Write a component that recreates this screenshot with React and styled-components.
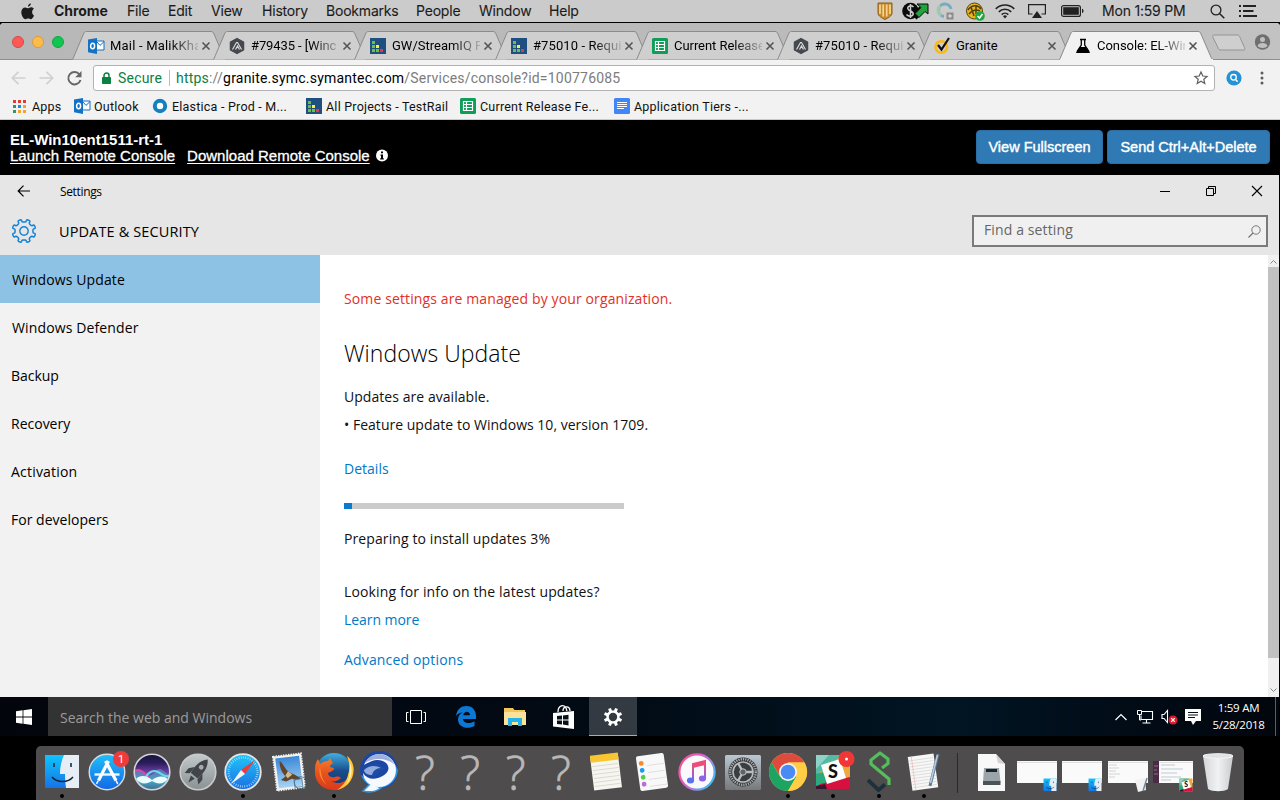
import React from "react";
import styled, { createGlobalStyle, css } from "styled-components";

const mac = `Roboto, "Noto Sans", sans-serif`;
const segoe = `"Open Sans", "Noto Sans", sans-serif`;
const helv = `"Liberation Sans", Arial, sans-serif`;

const GlobalStyle = createGlobalStyle`
  * { box-sizing: border-box; }
  html, body { margin: 0; padding: 0; background: #000; overflow: hidden; }
  svg { display: block; flex: none; overflow: visible; }
`;

const Screen = styled.div`
  width: 1280px;
  height: 800px;
  display: flex;
  flex-direction: column;
  background: #000;
  overflow: hidden;
  white-space: nowrap;
`;

/* ---------- menu bar ---------- */

const MenuBar = styled.div`
  height: 22px;
  flex: none;
  display: flex;
  align-items: center;
  background: #cbcbcb;
  color: #1b1b1b;
  font: 400 14px/22px Inter, ${mac};
`;

const AppleSlot = styled.div`
  width: 54px;
  padding-left: 21px;
`;

const MenuItem = styled.span`
  width: ${(p) => p.$w}px;
  font-weight: ${(p) => (p.$bold ? 700 : 400)};
  letter-spacing: ${(p) => p.$ls || 0}px;
  -webkit-text-stroke: ${(p) => (p.$bold ? 0 : 0.1)}px #1b1b1b;
`;

const StatusArea = styled.div`
  margin-left: auto;
  display: flex;
  align-items: center;
  height: 22px;
`;

const StatusSlot = styled.div`
  width: ${(p) => p.$w}px;
  display: flex;
  align-items: center;
`;

/* ---------- browser ---------- */

const Browser = styled.div`
  margin-top: 1px;
  height: 97px;
  flex: none;
  border-radius: 4px 4px 0 0;
  overflow: hidden;
  background: #f2f2f2;
  border-bottom: 1px solid #c9c9c9;
  font-family: ${mac};
`;

const TabStrip = styled.div`
  height: 37px;
  display: flex;
  align-items: flex-end;
  background: linear-gradient(90deg, #b7b7b7, #bcbcbc 80%, #c2c2c2);
  box-shadow: inset 0 -1px 0 #8e8e8e;
`;

const Lights = styled.div`
  width: 72px;
  height: 37px;
  padding: 0 0 0 12px;
  display: flex;
  align-items: center;
  gap: 8px;
`;

const Light = styled.i`
  width: 12px;
  height: 12px;
  border-radius: 50%;
  background: ${(p) => p.$c};
  border: 1px solid ${(p) => p.$b};
`;

const TabBox = styled.div`
  width: 141px;
  height: 29px;
  position: relative;
  display: flex;
  align-items: center;
  padding-left: 16px;
  z-index: ${(p) => (p.$active ? 2 : 1)};
`;

const TabShape = styled.svg`
  position: absolute;
  left: 0;
  top: 0;
`;

const TabTitle = styled.span`
  position: relative;
  width: 88px;
  margin-left: 6px;
  font-size: 13px;
  line-height: 28px;
  letter-spacing: ${(p) => p.$ls || 0}px;
  color: #000;
  ${(p) =>
    p.$fade &&
    css`
      mask-image: linear-gradient(90deg, #000 60px, rgba(0, 0, 0, 0.15) 100%);
    `}
`;

const TabIcon = styled.span`
  position: relative;
  width: 16px;
`;

const TabClose = styled.span`
  position: relative;
  margin-left: 4px;
`;

const StripEnd = styled.div`
  display: flex;
  align-items: center;
  height: 37px;
  padding: 0 0 0 12px;
  gap: 9px;
`;

const Toolbar = styled.div`
  height: 36px;
  display: flex;
  align-items: center;
  padding-left: 11px;
`;

const NavButton = styled.span`
  width: ${(p) => p.$w}px;
`;

const Omnibox = styled.div`
  width: 1122px;
  height: 26px;
  border: 1px solid #b2b2b2;
  border-radius: 3px;
  background: #fff;
  display: flex;
  align-items: center;
  padding: 0 6px 0 7px;
  font-size: 14px;
  color: #7c7c7c;
`;

const Secure = styled.span`
  color: #0b8043;
  margin-left: 6px;
  width: 52px;
  letter-spacing: 0.2px;
  border-right: 1px solid #bdbdbd;
  line-height: 16px;
`;

const Url = styled.span`
  margin-left: 6px;
  letter-spacing: 0.21px;
  flex: 1;
`;

const Green = styled.span`
  color: #0b8043;
`;

const Host = styled.span`
  color: #000;
`;

const ToolbarEnd = styled.div`
  display: flex;
  align-items: center;
  padding-left: 11px;
  gap: 18px;
`;

const Bookmarks = styled.div`
  height: 20px;
  display: flex;
  align-items: center;
  padding-left: 12px;
`;

const Bookmark = styled.span`
  width: ${(p) => p.$w}px;
  display: flex;
  align-items: center;
  gap: 4px;
  font-size: 12.5px;
  letter-spacing: 0.22px;
  color: #111;
`;

/* ---------- console header ---------- */

const ConsoleHeader = styled.div`
  height: 55px;
  flex: none;
  display: flex;
  justify-content: space-between;
  padding: 11px 10px 0 10px;
  color: #fff;
  font: 400 15px/17px ${helv};
`;

const ConsoleName = styled.div`
  font-weight: 700;
  height: 16px;
  font-size: 15px;
`;

const ConsoleLinks = styled.div`
  display: flex;
  align-items: center;
`;

const ConsoleLink = styled.a`
  text-decoration: underline;
  text-underline-offset: 2px;
  margin-right: ${(p) => p.$mr}px;
  -webkit-text-stroke: 0.3px #fff;
`;

const ConsoleButtons = styled.div`
  display: flex;
  gap: 4px;
  margin-top: -1px;
`;

const ConsoleButton = styled.button`
  width: ${(p) => p.$w}px;
  height: 34px;
  padding: 0;
  border: 1px solid #2a6ea4;
  border-radius: 4px;
  background: #2f7ab4;
  color: #fff;
  font: 400 14.5px/32px ${helv};
  -webkit-text-stroke: 0.4px #fff;
`;

/* ---------- remote desktop ---------- */

const Remote = styled.div`
  width: 1279px;
  flex: none;
  font-family: ${segoe};
  color: #000;
`;

const SettingsTop = styled.div`
  height: 80px;
  background: #e6e6e6;
`;

const TitleRow = styled.div`
  height: 32px;
  display: flex;
  align-items: center;
  padding-left: 17px;
`;

const TitleText = styled.span`
  margin-left: 29px;
  font-size: 12px;
  letter-spacing: -0.35px;
`;

const WindowButtons = styled.div`
  margin-left: auto;
  display: flex;
  gap: 34px;
  padding-right: 16px;
`;

const HeadRow = styled.div`
  height: 48px;
  display: flex;
  align-items: center;
  padding: 0 11px 0 11px;
`;

const HeadText = styled.span`
  margin-left: 22px;
  font-size: 14.5px;
  font-weight: 500;
  letter-spacing: 0.12px;
`;

const FindBox = styled.div`
  margin-left: auto;
  width: 296px;
  height: 32px;
  border: 2px solid #7a7a7a;
  background: #f0f0f0;
  color: #666;
  font-size: 14px;
  line-height: 26px;
  letter-spacing: 0.12px;
  display: flex;
  align-items: center;
  justify-content: space-between;
  padding: 0 5px 0 10px;
`;

const FindLabel = styled.span`
  height: 28px;
`;

const Body = styled.div`
  height: 442px;
  display: flex;
  background: #fff;
`;

const Sidebar = styled.div`
  width: 320px;
  background: #f2f2f2;
`;

const SideItem = styled.div`
  height: 48px;
  line-height: 49px;
  padding-left: ${(p) => (p.$indent ? 12 : 11)}px;
  font-size: 14px;
  letter-spacing: ${(p) => p.$ls || 0}px;
  background: ${(p) => (p.$active ? "#8ec2e4" : "transparent")};
`;

const Content = styled.div`
  flex: 1;
  padding: 30px 0 0 24px;
`;

const Line = styled.div`
  height: 28px;
  line-height: 28px;
  margin-top: ${(p) => p.$mt || 0}px;
  font-size: 14px;
  letter-spacing: ${(p) => p.$ls ?? 0.12}px;
  color: ${(p) => p.$c || "#111"};
`;

const Heading = styled.div`
  height: 36px;
  line-height: 35px;
  margin-top: 23px;
  font-size: 23px;
  font-weight: 300;
  color: #000;
  letter-spacing: 0.05px;
`;

const Track = styled.div`
  width: 280px;
  height: 6px;
  margin-top: 20px;
  background: #cbcbcb;
`;

const Fill = styled.div`
  width: 8px;
  height: 6px;
  background: #0a7bd0;
`;

const Scrollbar = styled.div`
  width: 11px;
  background: #f0f0f0;
  display: flex;
  flex-direction: column;
  align-items: center;
  justify-content: space-between;
  padding: 4px 0 4px;
`;

const Thumb = styled.div`
  width: 11px;
  height: 391px;
  margin-bottom: 27px;
  background: #c1c1c1;
`;

const Taskbar = styled.div`
  height: 39px;
  display: flex;
  background: linear-gradient(90deg, #02060c 0, #020a14 45%, #011523 75%, #010d19 86%, #02060d 100%);
`;

const TaskCell = styled.div`
  width: ${(p) => p.$w || 49}px;
  margin-right: ${(p) => p.$mr || 0}px;
  margin-left: ${(p) => p.$ml || 0}px;
  display: flex;
  align-items: center;
  justify-content: center;
  ${(p) =>
    p.$active &&
    css`
      background: #333a41;
      box-shadow: inset 0 -1px 0 #76b9ed;
    `}
`;

const TaskSearch = styled.div`
  width: 344px;
  background: #333;
  color: #9b9b9b;
  font-size: 14px;
  line-height: 41px;
  padding-left: 12px;
`;

const Tray = styled.div`
  margin-left: auto;
  display: flex;
  align-items: center;
`;

const TrayClock = styled.div`
  width: 73px;
  text-align: center;
  color: #fff;
  font-size: 11.5px;
  line-height: 17px;
  letter-spacing: -0.25px;
  padding-bottom: 1px;
`;

const ShowDesktop = styled.div`
  width: 4px;
  height: 39px;
  border-left: 1px solid #55606a;
`;

/* ---------- dock ---------- */

const DockBar = styled.div`
  margin: 10px 0 0 36px;
  width: 1208px;
  height: 54px;
  flex: none;
  display: flex;
  padding-left: 3px;
  border-radius: 5px 5px 0 0;
  background: #4f4c4e;
`;

const DockItem = styled.div`
  width: 45.4px;
  height: 54px;
  padding-top: 4px;
  display: flex;
  flex-direction: column;
  align-items: center;
`;

const Running = styled.i`
  width: 4px;
  height: 4px;
  border-radius: 50%;
  background: #000;
`;

const Missing = styled.span`
  height: 44px;
  font: 300 47px/44px "Open Sans", sans-serif;
  color: #b9b8b8;
  -webkit-text-stroke: 0.7px #b9b8b8;
`;

const DockDivider = styled.div`
  width: 22px;
  margin-top: 7px;
  height: 40px;
  display: flex;
  justify-content: center;
  &::after {
    content: "";
    width: 1px;
    background: #2b292a;
  }
`;

/* ---------- small icons ---------- */

const Outlook = () => (
  <svg width="16" height="16" viewBox="0 0 16 16">
    <path d="M8 3h8v9H8z" fill="#fff" stroke="#1272c6" />
    <path d="M9 4l3 3.400L16 3.600" fill="none" stroke="#1272c6" />
    <path d="M0 1.500 9 0v16L0 14.300z" fill="#1272c6" />
    <ellipse cx="4.600" cy="8" rx="2" ry="2.700" fill="none" stroke="#fff" strokeWidth="1.500" />
  </svg>
);
const Aha = () => (
  <svg width="16" height="16" viewBox="0 0 16 16">
    <path d="M8 .6l6.500 3.600v7.600L8 15.400l-6.500-3.600V4.200z" fill="#45494d" stroke="#45494d" strokeWidth="1.500" strokeLinejoin="round" />
    <path d="M3.500 11.500 7.500 4.500h1l4 7M6.500 11.500l2-3.500 2 3.500" fill="none" stroke="#d8d8d8" strokeWidth="1.200" />
  </svg>
);
const TestRail = () => (
  <svg width="16" height="16" viewBox="0 0 16 16">
    <path d="M0 0h16v16H0z" fill="#1f4f80" />
    <path d="M2 3h3v3H2zM2 7h3v3H2zM2 11h3v3H2zM6 11h3v3H6z" fill="#6cc04a" />
    <path d="M6 7h3v3H6z" fill="#f6ee4c" />
    <path d="M10 11h3v3h-3z" fill="#d93a58" />
  </svg>
);
const Sheets = () => (
  <svg width="16" height="16" viewBox="0 0 16 16">
    <rect width="16" height="16" rx="1.500" fill="#0f9d58" />
    <path d="M3.500 3.500h9v9h-9zM6.500 3.500v9M3.500 6.500h9M3.500 9.500h9" fill="none" stroke="#fff" strokeWidth="1.200" />
  </svg>
);
const Docs = () => (
  <svg width="16" height="16" viewBox="0 0 16 16">
    <rect width="16" height="16" rx="1.500" fill="#4285f4" />
    <path d="M3 4.500h10M3 6.500h10M3 8.500h10M3 10.500h7" stroke="#fff" />
  </svg>
);
const Norton = () => (
  <svg width="16" height="16" viewBox="0 0 16 16">
    <circle cx="7.300" cy="9" r="5.800" fill="none" stroke="#fdb813" strokeWidth="2.600" />
    <path d="M4 7l3.500 4.500L15 0" fill="none" stroke="#111" strokeWidth="2.200" />
  </svg>
);
const Flask = () => (
  <svg width="16" height="16" viewBox="0 0 16 16">
    <path d="M5 1.500h6M6.300 2v5L2 13.500M9.700 2v5l4.300 6.500" fill="none" stroke="#000" strokeWidth="1.300" />
    <path d="M5 9.500h6l3.500 5H1.500z" fill="#000" stroke="#000" />
  </svg>
);
const AppsGrid = () => (
  <svg width="16" height="16" viewBox="0 0 16 16">
    {["#e43d30", "#e43d30", "#e43d30", "#2a9d5c", "#1e88e5", "#f4a428", "#2a9d5c", "#f4a428", "#f4a428"].map((c, i) => (
      <rect key={i} x={1 + (i % 3) * 5} y={2 + Math.floor(i / 3) * 5} width="3" height="3" fill={c} />
    ))}
  </svg>
);
const Elastica = () => (
  <svg width="16" height="16" viewBox="0 0 16 16">
    <circle cx="8" cy="8" r="5.200" fill="#fff" stroke="#1381be" strokeWidth="4" />
  </svg>
);
const CloseX = () => (
  <svg width="8" height="8" viewBox="0 0 8 8">
    <path d="M.5.5l7 7M7.500.5l-7 7" stroke="#555" strokeWidth="1.600" />
  </svg>
);

const icons = { Outlook, Aha, TestRail, Sheets, Docs, Norton, Flask, AppsGrid, Elastica };

const menus = [
  ["Chrome", 73],
  ["File", 41],
  ["Edit", 43],
  ["View", 51],
  ["History", 64],
  ["Bookmarks", 90],
  ["People", 63],
  ["Window", 70],
  ["Help", 40],
];

const tabs = [
  ["Outlook", "Mail - MalikKha", 0.2],
  ["Aha", "#79435 - [Winc", -0.1],
  ["TestRail", "GW/StreamIQ F", 0],
  ["TestRail", "#75010 - Requi", 0.1],
  ["Sheets", "Current Release", -0.05],
  ["Aha", "#75010 - Requi", 0.1],
  ["Norton", "Granite", 0],
  ["Flask", "Console: EL-Wir", -0.05],
];

const bookmarks = [
  ["AppsGrid", "Apps", 62],
  ["Outlook", "Outlook", 78],
  ["Elastica", "Elastica - Prod - M...", 154],
  ["TestRail", "All Projects - TestRail", 154],
  ["Sheets", "Current Release Fe...", 154],
  ["Docs", "Application Tiers -...", 150],
];

function Tab({ icon, title, ls, active }) {
  const Icon = icons[icon];
  return (
    <TabBox $active={active}>
      <TabShape width="155" height="29" viewBox="0 0 155 29">
        <path
          d="M0 28.500C.8 28.300 1.200 27.500 1.700 26L11.500 3C12.300 1.200 12.800.5 14.500.5H139C140.700.5 141.200 1.200 142 3L151.500 25C152.300 27 153 28.300 154 28.500"
          fill={active ? "#f2f2f2" : "#cfcfcf"}
          stroke="#8b8b8b"
        />
        {active && <path d="M1 29H154" stroke="#f2f2f2" strokeWidth="2" />}
      </TabShape>
      <TabIcon>
        <Icon />
      </TabIcon>
      <TabTitle $fade={title !== "Granite"} $ls={ls}>
        {title}
      </TabTitle>
      <TabClose>
        <CloseX />
      </TabClose>
    </TabBox>
  );
}

function StatusIcons() {
  return (
    <>
      <StatusSlot $w={25}>
        <svg width="16" height="20" viewBox="0 0 16 20">
          <path d="M1 2h14v10c0 3-4 5-7 6.500C5 17 1 15 1 12z" fill="#c98a2c" stroke="#8d5d17" />
          <path d="M3 3.500v9.500M6.200 3.500v12M9.700 3.500v12M13 3.500v9.500" stroke="#f6d591" strokeWidth="1.700" />
        </svg>
      </StatusSlot>
      <StatusSlot $w={35}>
        <svg width="27" height="18" viewBox="0 0 27 18">
          <circle cx="8.500" cy="9" r="8.300" fill="#0b0b0b" />
          <path d="M12 15l8-8" stroke="#0b0b0b" strokeWidth="7" />
          <path d="M11.500 5C9.500 3 5.500 3.800 5.800 6.500S11.500 9 11.200 12 6 14.500 4.500 12.500M8.500 2v14" fill="none" stroke="#cfcfcf" strokeWidth="1.500" />
          <path d="M15 2h11v10l-3-2.500-6 6-4-4 6-6z" fill="#23a33c" stroke="#0b0b0b" />
        </svg>
      </StatusSlot>
      <StatusSlot $w={29}>
        <svg width="17" height="18" viewBox="0 0 17 18">
          <path d="M14 7A6.300 6.300 0 1 0 7 14.500" fill="none" stroke="#73adc2" strokeWidth="3" />
          <path d="M3 3.500A6.300 6.300 0 0 0 4 13.500" fill="none" stroke="#a4c9ae" strokeWidth="3" />
          <path d="M9.500 10.500h7v7h-7z" fill="#8d8d8d" />
          <path d="M13 12v4M11 14h4" stroke="#e8e8e8" />
        </svg>
      </StatusSlot>
      <StatusSlot $w={29}>
        <svg width="19" height="19" viewBox="0 0 19 19">
          <circle cx="8.500" cy="9" r="8" fill="#e9b51c" stroke="#57430b" />
          <path d="M2 8c3-5 10-6 13-1M3 12c3-4 8-5 11-3M5 5l3 9M10 3v9" fill="none" stroke="#51400f" strokeWidth="1.500" />
          <circle cx="14" cy="14" r="4.800" fill="#20a63e" />
          <path d="M11.500 14l2 2 3-4" fill="none" stroke="#fff" strokeWidth="1.500" />
        </svg>
      </StatusSlot>
      <StatusSlot $w={33}>
        <svg width="20" height="15" viewBox="0 0 20 15">
          <path d="M.8 4.800a13 13 0 0 1 18.400 0M3.800 7.800a8.800 8.800 0 0 1 12.400 0M6.700 10.600a4.700 4.700 0 0 1 6.600 0" fill="none" stroke="#222" strokeWidth="1.700" />
          <path d="M10 14.500l-2-2.200a2.800 2.800 0 0 1 4 0z" fill="#222" />
        </svg>
      </StatusSlot>
      <StatusSlot $w={33}>
        <svg width="18" height="14" viewBox="0 0 18 14">
          <path d="M4.500 10H.6V.6h16.800V10h-3.900" fill="none" stroke="#222" strokeWidth="1.200" />
          <path d="M9 7l5 7H4z" fill="#222" />
        </svg>
      </StatusSlot>
      <StatusSlot $w={41}>
        <svg width="23" height="12" viewBox="0 0 23 12">
          <rect x=".6" y=".6" width="18.800" height="10.800" rx="2" fill="none" stroke="#222" strokeWidth="1.200" />
          <rect x="2.200" y="2.200" width="15.600" height="7.600" fill="#222" />
          <path d="M21 3.800c2 .6 2 3.800 0 4.400z" fill="#222" />
        </svg>
      </StatusSlot>
      <MenuItem $w={108} $ls={-0.2}>Mon 1:59 PM</MenuItem>
      <StatusSlot $w={29}>
        <svg width="15" height="15" viewBox="0 0 15 15">
          <circle cx="6" cy="6" r="4.900" fill="none" stroke="#222" strokeWidth="1.300" />
          <path d="M9.500 9.500l4.800 4.800" stroke="#222" strokeWidth="1.500" />
        </svg>
      </StatusSlot>
      <StatusSlot $w={41}>
        <svg width="18" height="12" viewBox="0 0 18 12">
          <path d="M4 1h13M4 6h10.500M4 11h14M0 1h2M0 6h2M0 11h2" stroke="#222" strokeWidth="1.800" />
        </svg>
      </StatusSlot>
    </>
  );
}

/* ---------- dock artwork, drawn around the icon's centre ---------- */

const Art = ({ children }) => (
  <svg width="44" height="44" viewBox="-22 -22 44 44">
    {children}
  </svg>
);

const FinderFace = () => (
  <>
    <path d="M-17-17H17V16H-17z" fill="url(#finderL)" />
    <path d="M2-17C-1-10-2-4-2 2H3c0 5 .5 10 1 14H17V-17z" fill="#e6edf5" />
    <path d="M-8-9v4M9-9v4" stroke="#12304a" strokeWidth="1.600" />
    <path d="M-10 5C-5 11 6 11 11 5" fill="none" stroke="#12202d" strokeWidth="1.400" />
  </>
);

const SlackFace = () => (
  <>
    <path d="M-17-17H17V17H-17z" fill="#eda93b" />
    <path d="M-17-17H8L-4-4-13 0-17 4z" fill="#56b9a4" />
    <path d="M-17-17H-4L-17-3z" fill="#8fd3c8" />
    <path d="M-17 2L-10 0-5 12-17 17z" fill="#2bab7b" />
    <path d="M-13 12L17 5V17H-17z" fill="#d6103f" />
    <path d="M-17 14L-8 12-6 17H-17z" fill="#3c1330" />
    <path d="M-12-7L7-13 13 6-6 12z" fill="#fff" />
    <text x="0" y="6" textAnchor="middle" fontFamily="Lato, sans-serif" fontWeight="900" fontSize="18" fill="#111">
      S
    </text>
  </>
);

const dock = [
  { run: true, art: <FinderFace /> },
  {
    art: (
      <>
        <circle r="17.800" fill="url(#store)" stroke="#d9dde2" strokeWidth="1.400" />
        <path d="M-12.500 2.500H12.500" stroke="#f1f6fb" strokeWidth="2.400" />
        <path d="M-8.500 8.500L1.500-11M9 8.500L-1.500-11" stroke="#fff" strokeWidth="3.200" />
        <path d="M-9 9l-1.200 2.400M9.300 9l1.200 2.400" stroke="#fff" strokeWidth="1.500" strokeLinecap="round" />
        <circle cx="14" cy="-13" r="8" fill="#f03b3b" />
        <text x="14" y="-9" textAnchor="middle" fontFamily="Roboto, sans-serif" fontSize="11" fill="#fff">
          1
        </text>
      </>
    ),
  },
  {
    art: (
      <>
        <circle r="17.800" fill="url(#siri)" />
        <path d="M-17-2C-10-5-8 3-4 4S5-4 8-3 15 2 17 3C15 12 8 17 0 17.500-9 17-15 12-17 6z" fill="#5ca5c8" opacity=".55" />
        <path d="M-17-1C-11-4-7 2-3 5" fill="none" stroke="#f23fa6" strokeWidth="2" opacity=".85" />
        <path d="M-6 5C-3-1 2-2 6 0S12 5 17 4" fill="none" stroke="#67e8f0" strokeWidth="2" opacity=".9" />
        <path d="M-16 7C-11 2-5 4 0 8 5 4 11 3 16 7 12 12 6 13 0 9-6 13-12 12-16 7z" fill="#e9fdff" />
        <circle r="17.800" fill="none" stroke="#d4d4da" strokeWidth="1.600" />
      </>
    ),
  },
  {
    art: (
      <>
        <circle r="17.800" fill="url(#steel)" stroke="#c8cbcc" strokeWidth="1.600" />
        <g transform="translate(0 -1) rotate(40)">
          <path d="M0-15C5-10 6-3 4.500 6h-9C-6-3-5-10 0-15z" fill="#414549" />
          <path d="M-5-1L-9 4v6l4-3zM5-1L9 4v6L5 7zM-2.500 8h5L0 15z" fill="#414549" />
          <circle cy="-5" r="2.400" fill="#a5abad" />
        </g>
      </>
    ),
  },
  {
    run: true,
    art: (
      <>
        <circle r="17.800" fill="url(#safari)" stroke="#e2e4e6" strokeWidth="1.800" />
        <circle r="14.500" fill="none" stroke="#b9e7fb" strokeWidth="2.200" strokeDasharray=".7 1.570" />
        <path d="M12-12L2 2-2-2z" fill="#f03a36" />
        <path d="M-12 12L2 2-2-2z" fill="#f1f2f4" />
      </>
    ),
  },
  {
    art: (
      <g transform="rotate(-7)">
        <path d="M-14-17H14V17H-14z" fill="#f2f2f0" stroke="#f2f2f0" strokeWidth="2" strokeDasharray="1.500 1" />
        <path d="M-12-15H12V15H-12z" fill="url(#sky)" />
        <path d="M-8-12C-5-10-4-4-1-1 2 2 8 4 11 8 8 9 5 8 2 7L-4 9-9 7-4 4C-7 0-9-6-8-12z" fill="#60452f" />
        <path d="M-4 3L-1-1 3 3-2 6z" fill="#d6b98b" />
        <circle cx="10" cy="12" r="6" fill="none" stroke="#35536e" opacity=".6" />
        <path d="M4 8h8v8H4z" fill="none" stroke="#44708f" opacity=".7" />
      </g>
    ),
  },
  {
    run: true,
    art: (
      <>
        <circle cy="-1" r="18" fill="url(#globe)" />
        <path d="M13-16C19-11 21-4 19 3 16 14 7 19-2 18-14 17-20 8-19-3-19-7-18-10-16-13L-14-8C-12-10-9-11-6-11L-4-14C-3-12-2-10-1-9-3-8-4-6-4-5L0-4C0-1-4 0-6 1-6 4-3 6 1 5 4 4 6 5 7 6 4 9 0 10-3 9 4 13 12 11 14 4 16-2 16-10 13-16z" fill="url(#fox)" />
        <path d="M13-16C22-9 21 5 14 12 11 15 7 17 3 18 10 13 13 8 14 3 16-3 16-9 13-16z" fill="#fcc93a" />
        <path d="M16-9C19-2 18 7 12 13 16 6 16-1 16-9z" fill="#fff0a0" />
        <path d="M-14-6C-16 1-13 9-7 13-12 8-13 2-14-6z" fill="#f68a2c" />
      </>
    ),
  },
  {
    art: (
      <>
        <circle cy="-2" r="19" fill="#1c46a4" />
        <path d="M-18 3A19 19 0 0 0 19-2L16-8 0 15z" fill="#2f94e0" />
        <path d="M-8 11L-16 19C-8 21-3 20 2 16z" fill="#f4f9fd" stroke="#2f94e0" strokeWidth="1.600" />
        <path d="M-15-7C-12-15-5-18 1-18 10-18 17-10 17-2 17 8 9 15 0 15-9 15-16 8-16 1-13 6-7 8-1 6 6 4 11-1 9-6 7-12-2-13-7-11-10-10-13-8-15-7z" fill="#f6fafe" />
        <path d="M-14-9C-11-15-5-18 1-18 8-17 13-13 15-8 7-14-5-15-14-9z" fill="#9dafdd" />
        <path d="M-16 0C-14-6-8-9-2-8 3-7 6-4 6-1 3-2-1 0-3 4-8 5-14 3-16 0z" fill="#1d4ba6" />
        <path d="M-15-2C-10-7-3-7 2-4-3-4-6-1-7 3-11 3-15 1-15-2z" fill="#94abdc" />
      </>
    ),
  },
  { missing: true },
  { missing: true },
  { missing: true },
  { missing: true },
  {
    art: (
      <g transform="rotate(-7)">
        <path d="M-14-17H14V17H-14z" fill="#f7f5ef" />
        <path d="M-14-18H14V-11H-14z" fill="#f9c62f" />
        {[-7, -3, 1, 5, 9, 13].map((y) => (
          <path key={y} d={`M-13 ${y}H13`} stroke="#d6d4cc" strokeWidth=".8" />
        ))}
      </g>
    ),
  },
  {
    art: (
      <g transform="rotate(-8)">
        <rect x="-14" y="-17.500" width="28" height="35" rx="2" fill="#f8f8f8" />
        {["#f78b2a", "#1c9af0", "#51cf4b", "#bb6cd8"].map((c, i) => (
          <g key={c}>
            <circle cx="-9.500" cy={-10 + i * 7} r="2.400" fill={c} />
            <path d={`M-4 ${-7 + i * 7}H13`} stroke="#dcdcdc" strokeWidth=".8" />
          </g>
        ))}
      </g>
    ),
  },
  {
    art: (
      <>
        <circle r="17.600" fill="#f9f8fb" stroke="url(#itunes)" strokeWidth="2.200" />
        <path d="M-4 8V-8L8-11V6" fill="none" stroke="url(#note)" strokeWidth="2" />
        <path d="M-4-8L8-11V-7L-4-4z" fill="#ee4b77" />
        <ellipse cx="-6.500" cy="8.500" rx="3.600" ry="2.900" fill="#5b72ee" />
        <ellipse cx="5.500" cy="6.500" rx="3.600" ry="2.900" fill="#8a63e6" />
      </>
    ),
  },
  {
    art: (
      <>
        <rect x="-18" y="-17" width="36" height="35" rx="1.500" fill="url(#prefs)" />
        <circle r="14.500" fill="#303336" />
        <circle r="12.800" fill="none" stroke="#a9acae" strokeWidth="2.500" strokeDasharray="1.300 1" />
        <circle r="10" fill="#3b3e41" stroke="#b9bcbe" strokeWidth="1.600" />
        <path d="M0 0H10M0 0L-5-9M0 0L-5 9" stroke="#b9bcbe" strokeWidth="2.400" />
        <circle r="3.200" fill="#606366" stroke="#c3c5c7" />
      </>
    ),
  },
  {
    run: true,
    art: (
      <>
        <circle r="19" fill="#ffce44" />
        <path d="M0-9.500H16.500A19 19 0 0 0-16.500-9.500L-8 4z" fill="#dd4b3e" />
        <path d="M-16.500-9.500A19 19 0 0 0 0 19L8.500 4.500-8 4.500z" fill="#1da462" />
        <path d="M0-9.500H16.500A19 19 0 0 1 0 19L8.200 4.700z" fill="#ffce44" />
        <circle r="9" fill="#f4f4f4" />
        <circle r="7.300" fill="#4a8af4" />
      </>
    ),
  },
  {
    run: true,
    art: (
      <>
        <SlackFace />
        <circle cx="13.500" cy="-13" r="8" fill="#f03636" />
        <circle cx="13.500" cy="-13" r="1.500" fill="#fff" />
      </>
    ),
  },
  {
    run: true,
    art: (
      <>
        <path d="M3-4L9-8.500V-13L1-19-8-12V-8L10 7V13" fill="none" stroke="#54bd5c" strokeWidth="3.200" strokeLinejoin="round" />
        <path d="M-11 8L-.5 18 6 12.500" fill="none" stroke="#1d303b" strokeWidth="3.800" />
      </>
    ),
  },
  {
    run: true,
    art: (
      <>
        <g transform="rotate(-8)">
          <path d="M-14-17H12V17H-14z" fill="#f7f7f5" />
          {[-13, -10, -7, -4, -1, 2, 5, 8, 11, 14].map((y) => (
            <path key={y} d={`M-13 ${y}H11`} stroke="#d3d5d9" strokeWidth=".7" />
          ))}
          <path d="M-10.500-17V17" stroke="#f3b7b1" strokeWidth=".7" />
        </g>
        <path d="M14-18L6 14" stroke="#5f7a92" strokeWidth="3" />
        <path d="M13.500-17L6.500 11" stroke="#b9d0e4" strokeWidth="1.500" />
      </>
    ),
  },
];

const Thumbnail = ({ children, purple }) => (
  <Art>
    <path d="M-20-11H20V11H-20z" fill="#fafafa" />
    <path d="M-20-9.500H20" stroke="#e0e0e0" />
    {purple && <path d="M-20-11H-14V11H-20z" fill="#4b2a47" />}
    {children}
  </Art>
);

const files = [
  <Art>
    <path d="M-14-18H4L13-8V19H-14z" fill="#f8f8f8" />
    <path d="M4-18L13-8 6-9z" fill="#d2d2d2" />
    <path d="M-8-4H7L8.500 10H-9z" fill="#9aa5ab" />
    <path d="M-6-3H5V0H-6z" fill="#222" />
    <path d="M-9 9H8.500V13H-9z" fill="#4c5358" />
  </Art>,
  <Thumbnail>
    <g transform="translate(13 13) scale(.38)"><FinderFace /></g>
  </Thumbnail>,
  <Thumbnail>
    <g transform="translate(13 13) scale(.38)"><FinderFace /></g>
  </Thumbnail>,
  <Thumbnail>
    <path d="M-19-7h8M-19-4h10M-19-1h7M-19 2h11M-19 5h6" stroke="#c9c9c9" strokeWidth=".8" />
    <path d="M7 8L17 6 18 18 10 20z" fill="#f2f2f2" />
    <path d="M19 6L15 19" stroke="#70879b" strokeWidth="1.500" />
  </Thumbnail>,
  <Thumbnail purple>
    <path d="M-12-7H2M-12-3H10M-12 1H4M-12 5H8M-12 8H-2" stroke="#bccbd4" />
    <path d="M-19-6h4M-19-2h3M-19 2h4" stroke="#a483a0" strokeWidth=".8" />
    <g transform="translate(13 13) scale(.38)"><SlackFace /></g>
  </Thumbnail>,
  <Art>
    <path d="M-15-16H15L10 17C6 20-6 20-10 17z" fill="url(#bin)" />
    <ellipse cy="-16" rx="15" ry="2.300" fill="#dfe1e3" stroke="#f4f5f6" />
  </Art>,
];

const Grad = ({ id, stops, x1 = 0, x2 = 0, y2 = 1 }) => (
  <linearGradient id={id} x1={x1} y1="0" x2={x2} y2={y2}>
    {stops.map((s, i) => (
      <stop key={i} offset={i / (stops.length - 1)} stopColor={s} />
    ))}
  </linearGradient>
);

function Dock() {
  return (
    <DockBar>
      <svg width="0" height="0">
        <defs>
          <Grad id="finderL" stops={["#10c4fb", "#1574e8"]} />
          <Grad id="store" stops={["#1fc0fa", "#1467e6"]} />
          <Grad id="siri" stops={["#17143a", "#2b1d5c", "#6d3fa2", "#2fa6c4", "#1b2c4d"]} />
          <Grad id="steel" stops={["#c3cacb", "#899192"]} />
          <Grad id="safari" stops={["#20c6f8", "#1a6fe4"]} />
          <Grad id="sky" stops={["#3b88d8", "#a8d3f3"]} />
          <Grad id="globe" stops={["#3fb0e0", "#1b4c8c", "#15346f"]} />
          <Grad id="fox" stops={["#f5832a", "#e8511f", "#d93a1c"]} />
          <Grad id="itunes" stops={["#f4567f", "#e05ccf", "#4cb7f2"]} x2={1} y2={0.6} />
          <Grad id="note" stops={["#f0506e", "#8c5fe6"]} />
          <Grad id="prefs" stops={["#b9c7d1", "#77797b"]} />
          <Grad id="bin" stops={["#d4d6d9", "#f1f2f4", "#c9cbce"]} x2={1} y2={0} />
        </defs>
      </svg>
      {dock.map((d, i) => (
        <DockItem key={i}>
          {d.missing ? <Missing>?</Missing> : <Art>{d.art}</Art>}
          {d.run && <Running />}
        </DockItem>
      ))}
      <DockDivider />
      {files.map((f, i) => (
        <DockItem key={i}>{f}</DockItem>
      ))}
    </DockBar>
  );
}

const gearPath = (teeth, outer, inner, round) => {
  const pts = [];
  const shape = round
    ? [[-0.36, inner], [-0.24, inner + 0.5], [-0.2, outer - 0.4], [-0.12, outer], [0.12, outer], [0.2, outer - 0.4], [0.24, inner + 0.5], [0.36, inner]]
    : [[-0.3, inner], [-0.2, outer], [0.2, outer], [0.3, inner]];
  for (let i = 0; i < teeth; i++) {
    shape.forEach(([o, r]) => {
      const a = ((i + o) / teeth) * Math.PI * 2 - Math.PI / 2 + Math.PI / teeth;
      pts.push(`${(Math.cos(a) * r).toFixed(2)} ${(Math.sin(a) * r).toFixed(2)}`);
    });
  }
  return `M${pts.join("L")}Z`;
};

function RemoteDesktop() {
  return (
    <Remote>
      <SettingsTop>
        <TitleRow>
          <svg width="14" height="12" viewBox="0 0 14 12">
            <path d="M1 6h12M6.500.7L1.200 6l5.300 5.300" fill="none" stroke="#000" strokeWidth="1.200" />
          </svg>
          <TitleText>Settings</TitleText>
          <WindowButtons>
            <svg width="12" height="12" viewBox="0 0 12 12"><path d="M1 6.500h10" stroke="#000" /></svg>
            <svg width="12" height="12" viewBox="0 0 12 12">
              <path d="M1.500 3.500h7v7h-7zM3.500 3.500v-2h7v7h-2" fill="none" stroke="#000" />
            </svg>
            <svg width="12" height="12" viewBox="0 0 12 12"><path d="M1 1l10 10M11 1L1 11" stroke="#000" strokeWidth="1.100" /></svg>
          </WindowButtons>
        </TitleRow>
        <HeadRow>
          <svg width="26" height="26" viewBox="-13 -13 26 26">
            <path d={gearPath(8, 11.8, 9, true)} transform="translate(0 0)" fill="none" stroke="#1583d8" strokeWidth="1.500" strokeLinejoin="round" />
            <circle r="4.200" fill="none" stroke="#1583d8" strokeWidth="1.400" />
          </svg>
          <HeadText>UPDATE &amp; SECURITY</HeadText>
          <FindBox>
            <FindLabel>Find a setting</FindLabel>
            <svg width="13" height="13" viewBox="0 0 13 13">
              <circle cx="8" cy="5" r="4.200" fill="none" stroke="#777" />
              <path d="M5 8L.5 12.500" stroke="#777" strokeWidth="1.200" />
            </svg>
          </FindBox>
        </HeadRow>
      </SettingsTop>
      <Body>
        <Sidebar>
          <SideItem $active $indent $ls={0.13}>Windows Update</SideItem>
          <SideItem $indent $ls={0.13}>Windows Defender</SideItem>
          <SideItem $ls={-0.05}>Backup</SideItem>
          <SideItem>Recovery</SideItem>
          <SideItem $ls={0.2}>Activation</SideItem>
          <SideItem $ls={0.02}>For developers</SideItem>
        </Sidebar>
        <Content>
          <Line $c="#e3301f">Some settings are managed by your organization.</Line>
          <Heading>Windows Update</Heading>
          <Line $mt={11} $ls={0.05}>Updates are available.</Line>
          <Line $ls={0.02}>• Feature update to Windows 10, version 1709.</Line>
          <Line $mt={16} $ls={0.02} $c="#0078c8">Details</Line>
          <Track><Fill /></Track>
          <Line $mt={16} $ls={0.1}>Preparing to install updates 3%</Line>
          <Line $mt={25} $ls={0.13}>Looking for info on the latest updates?</Line>
          <Line $c="#0078c8" $ls={-0.06}>Learn more</Line>
          <Line $mt={12} $ls={0.16} $c="#0078c8">Advanced options</Line>
        </Content>
        <Scrollbar>
          <svg width="7" height="5" viewBox="0 0 7 5"><path d="M.5 4.500l3-3 3 3" fill="none" stroke="#888" /></svg>
          <Thumb />
          <svg width="7" height="5" viewBox="0 0 7 5"><path d="M.5.5l3 3 3-3" fill="none" stroke="#888" /></svg>
        </Scrollbar>
      </Body>
      <Taskbar>
        <TaskCell $w={48}>
          <svg width="16" height="16" viewBox="0 0 16 16">
            <path d="M0 2.200L6.600 1.300V7.600H0zM7.400 1.200L16 0V7.600H7.400zM0 8.400H6.600V14.700L0 13.800zM7.400 8.400H16V16L7.400 14.800z" fill="#fff" />
          </svg>
        </TaskCell>
        <TaskSearch>Search the web and Windows</TaskSearch>
        <TaskCell $w={48} $mr={1}>
          <svg width="20" height="14" viewBox="0 0 20 14">
            <path d="M4.500.5h11v13h-11zM2.500 2.500h-2v9h2M17.500 2.500h2v9h-2" fill="none" stroke="#fff" />
          </svg>
        </TaskCell>
        <TaskCell>
          <svg width="20" height="22" viewBox="0 0 20 22">
            <path d="M0 10C1 3 5 0 10.500 0 17 0 20 5 20 10v3H7c.3 4 6.500 5.500 11.500 2.300V20C11 24 2 21 2 13.500 2 10 4 7.500 7 6.500 4 6.500 1.500 8 0 10zM7.200 9.300H14C14 4.500 8 4.500 7.200 9.300z" fill="#0c78d6" fillRule="evenodd" />
          </svg>
        </TaskCell>
        <TaskCell>
          <svg width="22" height="18" viewBox="0 0 22 18">
            <path d="M0 0h9l1.500 2H21v15H0z" fill="#f1c75b" />
            <path d="M0 4h22v13H0z" fill="#fbe29a" />
            <path d="M4 18v-8h14v8h-4v-4H8v4z" fill="#24b3ea" />
          </svg>
        </TaskCell>
        <TaskCell>
          <svg width="22" height="24" viewBox="0 0 22 24">
            <path d="M5 7C5 0 11-1 13 3l1 3M10 6c0-5 7-6 7 0" fill="none" stroke="#fff" strokeWidth="1.300" />
            <path d="M0 8L21 6V24L0 21.500z" fill="#fff" />
            <path d="M4 11L9 10.500v4H4zM10 10.400L15.500 9.800v4.700H10zM4 15.500h5v4L4 19zM10 15.500h5.500v4.900L10 19.600z" fill="#05101b" />
          </svg>
        </TaskCell>
        <TaskCell $active $w={48} $ml={1}>
          <svg width="20" height="20" viewBox="-10 -10 20 20">
            <path d={gearPath(8, 9.3, 6.7) + "M-4.200 0a4.200 4.200 0 1 0 8.400 0a4.200 4.200 0 1 0-8.400 0"} fill="#fff" fillRule="evenodd" />
          </svg>
        </TaskCell>
        <Tray>
          <StatusSlot $w={22}>
            <svg width="12" height="8" viewBox="0 0 12 8"><path d="M.5 7L6 1.500 11.500 7" fill="none" stroke="#fff" strokeWidth="1.200" /></svg>
          </StatusSlot>
          <StatusSlot $w={24}>
            <svg width="16" height="14" viewBox="0 0 16 14">
              <path d="M5 1.500h10.500v8H4v-4M9.500 10v3M5.500 13h8" fill="none" stroke="#fff" strokeWidth="1.100" />
              <path d="M.5.5h4v4h-4zM2.500 5v5H4" fill="none" stroke="#fff" />
            </svg>
          </StatusSlot>
          <StatusSlot $w={24}>
            <svg width="17" height="16" viewBox="0 0 17 16">
              <path d="M1 5.500h2l3.500-4v12l-3.500-4H1z" fill="none" stroke="#fff" strokeWidth="1.100" />
              <circle cx="12" cy="11" r="4.500" fill="#e3172c" />
              <path d="M10.200 9.200l3.600 3.600M13.800 9.200l-3.600 3.600" stroke="#fff" strokeWidth="1.200" />
            </svg>
          </StatusSlot>
          <StatusSlot $w={17}>
            <svg width="16" height="16" viewBox="0 0 16 16">
              <path d="M0 0h16v12h-5l-3 4-2-4H0z" fill="#fff" />
              <path d="M3 3.500h10M3 6h10M3 8.500h7" stroke="#05101b" />
            </svg>
          </StatusSlot>
          <TrayClock>
            <div>1:59 AM</div>
            <div>5/28/2018</div>
          </TrayClock>
          <ShowDesktop />
        </Tray>
      </Taskbar>
    </Remote>
  );
}

export default function App() {
  return (
    <Screen>
      <GlobalStyle />
      <MenuBar>
        <AppleSlot>
          <svg width="14" height="17" viewBox="0 0 14 17">
            <path d="M9.800.3C10 1.800 8.700 3.600 7 3.700 6.800 2.200 8.200.5 9.800.3z" fill="#1b1b1b" />
            <path d="M13 12.500C12.300 14.500 11 16.200 9.800 16.200 8.800 16.200 8.500 15.600 7.200 15.600S5.600 16.200 4.600 16.200C2.700 16.200.3 12.700.3 9.200.3 6.100 2.200 4.400 4.200 4.400 5.400 4.400 6.400 5.200 7.100 5.200S8.900 4.300 10.200 4.300C11.300 4.300 12.300 4.900 12.900 5.800 10.400 7.300 10.700 11.300 13 12.500z" fill="#1b1b1b" />
          </svg>
        </AppleSlot>
        {menus.map(([m, w], i) => (
          <MenuItem key={m} $w={w} $bold={i === 0} $ls={i === 0 ? -0.05 : -0.2}>
            {m}
          </MenuItem>
        ))}
        <StatusArea>
          <StatusIcons />
        </StatusArea>
      </MenuBar>

      <Browser>
        <TabStrip>
          <Lights>
            <Light $c="#fc5a56" $b="#dd4541" />
            <Light $c="#fdbc4a" $b="#dd9c35" />
            <Light $c="#10c550" $b="#0fa843" />
          </Lights>
          {tabs.map(([icon, title, ls], i) => (
            <Tab key={i} icon={icon} title={title} ls={ls} active={i === 7} />
          ))}
          <StripEnd>
            <svg width="34" height="17" viewBox="0 0 34 17">
              <path d="M2 .5H25C27 .5 27.500 1.500 28 3L32.500 13C33.500 15 32.500 15.500 31 15.500H9C7 15.500 6.500 14.500 6 13L1 3C.5 1.500.5.5 2 .5z" fill="#cfcfcf" stroke="#949494" transform="translate(0 1.500)" />
            </svg>
            <svg width="16" height="16" viewBox="0 0 16 16">
              <circle cx="7.500" cy="8" r="7.700" fill="#6f6f6f" />
              <circle cx="7.500" cy="5.600" r="2.500" fill="#c0c0c0" />
              <path d="M2.500 12c.5-4 9.500-4 10 0-2 2.500-8 2.500-10 0z" fill="#c0c0c0" />
            </svg>
          </StripEnd>
        </TabStrip>
        <Toolbar>
          <NavButton $w={28}>
            <svg width="15" height="14" viewBox="0 0 15 14"><path d="M1 7h13.500M7.500.8L1.300 7l6.200 6.200" fill="none" stroke="#d0d0d0" strokeWidth="1.700" /></svg>
          </NavButton>
          <NavButton $w={28}>
            <svg width="15" height="14" viewBox="0 0 15 14"><path d="M.5 7H14M7.500.8L13.700 7l-6.200 6.200" fill="none" stroke="#d0d0d0" strokeWidth="1.700" /></svg>
          </NavButton>
          <NavButton $w={26}>
            <svg width="15" height="15" viewBox="0 0 15 15">
              <path d="M12.500 3.500A6.200 6.200 0 1 0 13.500 9" fill="none" stroke="#666" strokeWidth="1.900" />
              <path d="M14.500 0v6.300H8.200z" fill="#666" />
            </svg>
          </NavButton>
          <Omnibox>
            <svg width="11" height="13" viewBox="0 0 11 13">
              <path d="M3 6V3.500a2.500 2.500 0 0 1 5 0V6" fill="none" stroke="#0b8043" strokeWidth="1.500" />
              <rect x="1" y="5" width="9" height="7" rx=".8" fill="#0b8043" />
            </svg>
            <Secure>Secure</Secure>
            <Url>
              <Green>https</Green>://<Host>granite.symc.symantec.com</Host>/Services/console?id=100776085
            </Url>
            <svg width="14" height="14" viewBox="0 0 14 14">
              <path d="M7 1l1.800 4 4.300.4-3.300 2.900 1 4.200L7 10.300l-3.800 2.200 1-4.200L.9 5.400 5.200 5z" fill="none" stroke="#5f5f5f" strokeWidth="1.200" />
            </svg>
          </Omnibox>
          <ToolbarEnd>
            <svg width="16" height="16" viewBox="0 0 16 16">
              <circle cx="8" cy="8" r="7.600" fill="#2492d4" />
              <circle cx="7.500" cy="7.300" r="2.800" fill="none" stroke="#fff" strokeWidth="1.300" />
              <path d="M9.500 9.500l2.200 2.200" stroke="#fff" strokeWidth="1.500" />
            </svg>
            <svg width="4" height="14" viewBox="0 0 4 14">
              <circle cx="2" cy="2" r="1.500" fill="#5c5c5c" />
              <circle cx="2" cy="7" r="1.500" fill="#5c5c5c" />
              <circle cx="2" cy="12" r="1.500" fill="#5c5c5c" />
            </svg>
          </ToolbarEnd>
        </Toolbar>
        <Bookmarks>
          {bookmarks.map(([icon, label, w]) => {
            const Icon = icons[icon];
            return (
              <Bookmark key={label} $w={w}>
                <Icon />
                {label}
              </Bookmark>
            );
          })}
        </Bookmarks>
      </Browser>

      <ConsoleHeader>
        <div>
          <ConsoleName>EL-Win10ent1511-rt-1</ConsoleName>
          <ConsoleLinks>
            <ConsoleLink $mr={12}>Launch Remote Console</ConsoleLink>
            <ConsoleLink $mr={6}>Download Remote Console</ConsoleLink>
            <svg width="12" height="12" viewBox="0 0 12 12">
              <circle cx="6" cy="5.500" r="6" fill="#fff" />
              <path d="M5 1.500h2v1.800H5zM4.500 4.500H7v3.700h.8V9.500H4.200V8.200H5V5.700h-.5z" fill="#000" />
            </svg>
          </ConsoleLinks>
        </div>
        <ConsoleButtons>
          <ConsoleButton $w={127}>View Fullscreen</ConsoleButton>
          <ConsoleButton $w={163}>Send Ctrl+Alt+Delete</ConsoleButton>
        </ConsoleButtons>
      </ConsoleHeader>

      <RemoteDesktop />
      <Dock />
    </Screen>
  );
}
